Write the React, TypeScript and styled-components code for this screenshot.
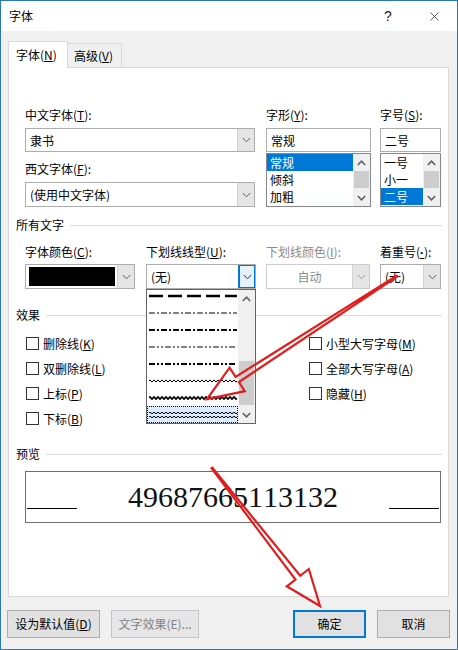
import React from 'react'
import styled, { createGlobalStyle } from 'styled-components'
import { X } from 'lucide-react'

const GlobalStyle = createGlobalStyle`
  html, body { margin: 0; padding: 0; background: #fff; }
  body {
    font-family: "Noto Sans CJK SC", "Noto Sans", sans-serif;
    font-size: 12px;
    color: #000;
    text-autospace: no-autospace;
    text-spacing-trim: space-all;
    font-kerning: none;
  }
  * { box-sizing: border-box; }
  u { text-underline-offset: 1px; }
`

const Window = styled.div`
  position: relative;
  width: 458px;
  height: 650px;
  border: 1px solid #2b79b3;
  background: #f0f0f0;
  display: flex;
  flex-direction: column;
  overflow: hidden;
`

const TitleBar = styled.div`
  height: 30px;
  background: #fff;
  display: flex;
  align-items: center;
  padding-left: 8px;
`

const TitleText = styled.span`
  flex: 1;
  line-height: 16px;
`

const TitleBtn = styled.div`
  width: 46px;
  height: 30px;
  display: flex;
  align-items: center;
  justify-content: center;
  font-size: 14px;
  font-family: "Liberation Sans", sans-serif;
  color: #222;
`

const TabRow = styled.div`
  display: flex;
  align-items: flex-end;
  height: 26px;
  margin: 10px 0 0 7px;
`

const Tab = styled.div<{ $active?: boolean }>`
  height: ${p => (p.$active ? '27px' : '24px')};
  width: ${p => (p.$active ? '60px' : '54px')};
  padding-left: ${p => (p.$active ? '7px' : '6px')};
  display: flex;
  align-items: center;
  background: ${p => (p.$active ? '#fff' : '#f0f0f0')};
  border: 1px solid #d9d9d9;
  border-bottom: none;
  border-left: ${p => (p.$active ? '1px solid #d9d9d9' : 'none')};
  margin-bottom: ${p => (p.$active ? '-1px' : '0')};
  position: relative;
  z-index: ${p => (p.$active ? 1 : 0)};
  line-height: 16px;
`

const Panel = styled.div`
  margin-left: 7px;
  width: 441px;
  height: 530px;
  background: #fff;
  border: 1px solid #d9d9d9;
  padding: 39px 6px 0 7px;
  display: flex;
  flex-direction: column;
`

const Indent = styled.div<{ $pl?: number; $mt?: number }>`
  display: flex;
  padding-left: ${p => p.$pl ?? 9}px;
  margin-top: ${p => p.$mt ?? 0}px;
`

const Field = styled.div<{ $w: number; $ml?: number }>`
  position: relative;
  width: ${p => p.$w}px;
  margin-left: ${p => p.$ml ?? 0}px;
  display: flex;
  flex-direction: column;
`

const Label = styled.div<{ $mt?: number; $mb?: number; $dim?: boolean }>`
  height: 16px;
  line-height: 16px;
  white-space: nowrap;
  margin-top: ${p => p.$mt ?? 0}px;
  margin-bottom: ${p => p.$mb ?? 5}px;
  color: ${p => (p.$dim ? '#8a8a8a' : '#000')};
`

const Key = styled.u<{ $latin?: boolean }>`
  font-family: ${p => (p.$latin ? '"Liberation Sans", sans-serif' : 'inherit')};
  font-weight: ${p => (p.$latin ? 700 : 'inherit')};
`

const ComboBox = styled.div<{ $h?: number; $disabled?: boolean }>`
  height: ${p => p.$h ?? 25}px;
  display: flex;
  background: #fff;
  border: 1px solid ${p => (p.$disabled ? '#cccccc' : '#adadad')};
`

const ComboText = styled.div<{ $center?: boolean; $disabled?: boolean }>`
  flex: 1;
  padding-left: ${p => (p.$center ? 0 : 4)}px;
  display: flex;
  align-items: center;
  justify-content: ${p => (p.$center ? 'center' : 'flex-start')};
  color: ${p => (p.$disabled ? '#8a8a8a' : '#000')};
  white-space: nowrap;
`

const Swatch = styled.div`
  flex: 1;
  margin: 2px 2px 2px 3px;
  background: #000;
`

const DropBtn = styled.div<{ $hot?: boolean }>`
  width: 17px;
  display: flex;
  align-items: center;
  justify-content: center;
  background: ${p => (p.$hot ? '#e5f1fb' : '#e5e5e5')};
  box-shadow: ${p => (p.$hot ? 'inset 0 0 0 1px #0078d7' : 'none')};
  border-left: 1px solid ${p => (p.$hot ? '#0078d7' : '#d2d2d2')};
`

const TextBox = styled.div`
  height: 24px;
  border: 1px solid #adadad;
  display: flex;
  align-items: center;
  padding-left: 4px;
`

const ListBox = styled.div<{ $h: number }>`
  height: ${p => p.$h}px;
  margin-top: 1px;
  border: 1px solid #828790;
  display: flex;
  background: #fff;
`

const ListItems = styled.div`
  flex: 1;
  display: flex;
  flex-direction: column;
  overflow: hidden;
`

const ListItem = styled.div<{ $sel?: boolean; $w?: number }>`
  height: 17px;
  line-height: 17px;
  padding-left: 3px;
  width: ${p => (p.$w ? p.$w + 'px' : 'auto')};
  background: ${p => (p.$sel ? '#0078d7' : 'transparent')};
  color: ${p => (p.$sel ? '#fff' : '#000')};
  white-space: nowrap;
`

const ScrollBar = styled.div`
  width: 17px;
  display: flex;
  flex-direction: column;
  background: #f0f0f0;
`

const ScrollArrow = styled.div`
  height: 17px;
  display: flex;
  align-items: center;
  justify-content: center;
  background: #f0f0f0;
`

const ScrollTrack = styled.div`
  flex: 1;
  display: flex;
  flex-direction: column;
  padding: 0 1px;
`

const Thumb = styled.div<{ $top: number; $h: number }>`
  margin-top: ${p => p.$top}px;
  height: ${p => p.$h}px;
  background: #cdcdcd;
`

const SectionHead = styled.div<{ $mt: number }>`
  display: flex;
  align-items: center;
  gap: 6px;
  height: 16px;
  line-height: 16px;
  margin-top: ${p => p.$mt}px;
  &::after {
    content: '';
    flex: 1;
    height: 1px;
    background: #dcdcdc;
  }
`

const DropList = styled.div`
  position: absolute;
  top: 100%;
  left: 0;
  width: 110px;
  height: 135px;
  background: #fff;
  border: 1px solid #646464;
  display: flex;
  z-index: 5;
`

const PatternItems = styled.div`
  flex: 1;
  overflow: hidden;
  display: flex;
  flex-direction: column;
`

const PatternItem = styled.div<{ $sel?: boolean; $first?: boolean }>`
  height: 17px;
  flex-shrink: 0;
  margin-top: ${p => (p.$first ? '-3px' : '0')};
  padding-left: 2px;
  display: flex;
  align-items: center;
  background: ${p => (p.$sel ? '#dcecfc' : 'transparent')};
  outline: ${p => (p.$sel ? '1px dotted #000' : 'none')};
  outline-offset: -1px;
`

const EffectsWrap = styled.div`
  display: flex;
  padding-left: 10px;
  margin-top: 8px;
`

const EffectCol = styled.div<{ $w?: number }>`
  width: ${p => (p.$w ? p.$w + 'px' : 'auto')};
  display: flex;
  flex-direction: column;
`

const CheckRow = styled.label`
  height: 25px;
  display: flex;
  align-items: center;
  white-space: nowrap;
  line-height: 16px;
`

const Box = styled.span`
  width: 13px;
  height: 13px;
  margin-right: 4px;
  border: 1px solid #333;
  background: #fff;
  flex-shrink: 0;
`

const PreviewBox = styled.div`
  margin: 9px 0 0 9px;
  width: 416px;
  height: 52px;
  border: 1px solid #6e6e6e;
  display: flex;
  align-items: center;
  padding: 0 1px;
`

const PreviewLine = styled.div`
  width: 50px;
  height: 1px;
  background: #000;
  margin-top: 22px;
`

const PreviewText = styled.div`
  flex: 1;
  text-align: center;
  font-family: "Liberation Serif", serif;
  font-size: 30px;
  line-height: 30px;
  color: #111;
`

const ButtonRow = styled.div`
  display: flex;
  margin-top: 13px;
  padding: 0 7px 0 6px;
`

const Button = styled.div<{ $w: number; $ml?: number; $primary?: boolean; $disabled?: boolean }>`
  width: ${p => p.$w}px;
  height: 28px;
  margin-left: ${p => (p.$ml === undefined ? 0 : p.$ml + 'px')};
  display: flex;
  align-items: center;
  justify-content: center;
  background: ${p => (p.$disabled ? '#e6e6e6' : '#e1e1e1')};
  border: ${p => (p.$primary ? '2px solid #0078d7' : p.$disabled ? '1px solid #c4c4c4' : '1px solid #adadad')};
  color: ${p => (p.$disabled ? '#838383' : '#000')};
  line-height: 16px;
`

const Spacer = styled.div`
  flex: 1;
`

const Overlay = styled.svg`
  position: absolute;
  left: -1px;
  top: -1px;
  pointer-events: none;
  z-index: 10;
`

const Chevron = ({ up, color = '#606060', bold }: { up?: boolean; color?: string; bold?: boolean }) => (
  <svg width="9" height="6" viewBox="0 0 9 6">
    <path
      d={up ? 'M0.8 5 L4.5 1.2 L8.2 5' : 'M0.8 1 L4.5 4.8 L8.2 1'}
      fill="none"
      stroke={color}
      strokeWidth={bold ? 1.6 : 1}
    />
  </svg>
)

const wave = (y: number, w: number, a = 1.6) => {
  let d = `M0,${y} q1,-${a} 2,0`
  for (let x = 2; x < w; x += 2) d += ' t2,0'
  return d
}

type Pattern = { dash?: string; width: number; wave?: boolean; double?: boolean }

const patterns: Pattern[] = [
  { dash: '14 5', width: 2.5 },
  { dash: '6 2 2 2', width: 1 },
  { dash: '6 2 2 2', width: 2 },
  { dash: '6 2 2 2 2 2', width: 1 },
  { dash: '6 2 2 2 2 2', width: 2 },
  { wave: true, width: 1 },
  { wave: true, width: 1.8 },
  { wave: true, width: 1, double: true },
]

const LinePattern = ({ p }: { p: Pattern }) => (
  <svg width="88" height="14" viewBox="0 0 88 14">
    {p.wave ? (
      p.double ? (
        <>
          <path d={wave(5, 88)} fill="none" stroke="#000" strokeWidth={p.width} />
          <path d={wave(9, 88)} fill="none" stroke="#000" strokeWidth={p.width} />
        </>
      ) : (
        <path d={wave(7, 88, 2.2)} fill="none" stroke="#000" strokeWidth={p.width} />
      )
    ) : (
      <line x1="0" y1="7" x2="88" y2="7" stroke="#000" strokeWidth={p.width} strokeDasharray={p.dash} />
    )}
  </svg>
)

const arrowPoints = (sx: number, sy: number, tx: number, ty: number, w = 3, h = 14, l = 36) => {
  const dx = tx - sx
  const dy = ty - sy
  const len = Math.hypot(dx, dy)
  const ux = dx / len
  const uy = dy / len
  const nx = -uy
  const ny = ux
  const bx = tx - ux * l
  const by = ty - uy * l
  return [
    [sx + nx * 0.5, sy + ny * 0.5],
    [bx + nx * w, by + ny * w],
    [bx + nx * h, by + ny * h],
    [tx, ty],
    [bx - nx * h, by - ny * h],
    [bx - nx * w, by - ny * w],
    [sx - nx * 0.5, sy - ny * 0.5],
  ]
    .map(pt => pt.map(v => v.toFixed(1)).join(','))
    .join(' ')
}

// label with an underlined access key, e.g. 中文字体(T):
const Acc = ({ text, k, tail = ':' }: { text: string; k: string; tail?: string }) => (
  <span>
    {text + '('}
    <Key $latin={k === '·'}>{k}</Key>
    {')' + tail}
  </span>
)

export default function App() {
  return (
    <>
      <GlobalStyle />
      <Window>
        <TitleBar>
          <TitleText>字体</TitleText>
          <TitleBtn>?</TitleBtn>
          <TitleBtn>
            <X size={15} strokeWidth={1.1} color="#111" />
          </TitleBtn>
        </TitleBar>

        <TabRow>
          <Tab $active>
            <Acc text="字体" k="N" tail="" />
          </Tab>
          <Tab>
            <Acc text="高级" k="V" tail="" />
          </Tab>
        </TabRow>

        <Panel>
          <Indent>
            <Field $w={230}>
              <Label>
                <Acc text="中文字体" k="T" />
              </Label>
              <ComboBox $h={24}>
                <ComboText>隶书</ComboText>
                <DropBtn>
                  <Chevron />
                </DropBtn>
              </ComboBox>
              <Label $mt={9} $mb={5}>
                <Acc text="西文字体" k="F" />
              </Label>
              <ComboBox>
                <ComboText>(使用中文字体)</ComboText>
                <DropBtn>
                  <Chevron />
                </DropBtn>
              </ComboBox>
            </Field>

            <Field $w={105} $ml={11}>
              <Label>
                <Acc text="字形" k="Y" />
              </Label>
              <TextBox>常规</TextBox>
              <ListBox $h={54}>
                <ListItems>
                  <ListItem $sel>常规</ListItem>
                  <ListItem>倾斜</ListItem>
                  <ListItem>加粗</ListItem>
                </ListItems>
                <ScrollBar>
                  <ScrollArrow>
                    <Chevron up bold />
                  </ScrollArrow>
                  <ScrollTrack>
                    <Thumb $top={0} $h={17} />
                  </ScrollTrack>
                  <ScrollArrow>
                    <Chevron bold />
                  </ScrollArrow>
                </ScrollBar>
              </ListBox>
            </Field>

            <Field $w={61} $ml={9}>
              <Label>
                <Acc text="字号" k="S" />
              </Label>
              <TextBox>二号</TextBox>
              <ListBox $h={54}>
                <ListItems>
                  <ListItem>一号</ListItem>
                  <ListItem>小一</ListItem>
                  <ListItem $sel $w={42}>
                    二号
                  </ListItem>
                </ListItems>
                <ScrollBar>
                  <ScrollArrow>
                    <Chevron up bold />
                  </ScrollArrow>
                  <ScrollTrack>
                    <Thumb $top={0} $h={17} />
                  </ScrollTrack>
                  <ScrollArrow>
                    <Chevron bold />
                  </ScrollArrow>
                </ScrollBar>
              </ListBox>
            </Field>
          </Indent>

          <SectionHead $mt={10}>所有文字</SectionHead>

          <Indent $mt={11}>
            <Field $w={110}>
              <Label $mb={4}>
                <Acc text="字体颜色" k="C" />
              </Label>
              <ComboBox>
                <Swatch />
                <DropBtn>
                  <Chevron />
                </DropBtn>
              </ComboBox>
            </Field>

            <Field $w={110} $ml={11}>
              <Label $mb={4}>
                <Acc text="下划线线型" k="U" />
              </Label>
              <ComboBox>
                <ComboText>(无)</ComboText>
                <DropBtn $hot>
                  <Chevron color="#333" />
                </DropBtn>
              </ComboBox>
              <DropList>
                <PatternItems>
                  {patterns.map((p, i) => (
                    <PatternItem key={i} $first={i === 0} $sel={i === patterns.length - 1}>
                      <LinePattern p={p} />
                    </PatternItem>
                  ))}
                </PatternItems>
                <ScrollBar>
                  <ScrollArrow>
                    <Chevron up bold />
                  </ScrollArrow>
                  <ScrollTrack>
                    <Thumb $top={54} $h={44} />
                  </ScrollTrack>
                  <ScrollArrow>
                    <Chevron bold />
                  </ScrollArrow>
                </ScrollBar>
              </DropList>
            </Field>

            <Field $w={104} $ml={10}>
              <Label $mb={4} $dim>
                <Acc text="下划线颜色" k="I" />
              </Label>
              <ComboBox $disabled>
                <ComboText $center $disabled>
                  自动
                </ComboText>
                <DropBtn>
                  <Chevron color="#9a9a9a" />
                </DropBtn>
              </ComboBox>
            </Field>

            <Field $w={61} $ml={10}>
              <Label $mb={4}>
                <Acc text="着重号" k="·" />
              </Label>
              <ComboBox>
                <ComboText>(无)</ComboText>
                <DropBtn>
                  <Chevron />
                </DropBtn>
              </ComboBox>
            </Field>
          </Indent>

          <SectionHead $mt={18}>效果</SectionHead>

          <EffectsWrap>
            <EffectCol $w={283}>
              <CheckRow>
                <Box />
                <Acc text="删除线" k="K" tail="" />
              </CheckRow>
              <CheckRow>
                <Box />
                <Acc text="双删除线" k="L" tail="" />
              </CheckRow>
              <CheckRow>
                <Box />
                <Acc text="上标" k="P" tail="" />
              </CheckRow>
              <CheckRow>
                <Box />
                <Acc text="下标" k="B" tail="" />
              </CheckRow>
            </EffectCol>
            <EffectCol>
              <CheckRow>
                <Box />
                <Acc text="小型大写字母" k="M" tail="" />
              </CheckRow>
              <CheckRow>
                <Box />
                <Acc text="全部大写字母" k="A" tail="" />
              </CheckRow>
              <CheckRow>
                <Box />
                <Acc text="隐藏" k="H" tail="" />
              </CheckRow>
            </EffectCol>
          </EffectsWrap>

          <SectionHead $mt={15}>预览</SectionHead>

          <PreviewBox>
            <PreviewLine />
            <PreviewText>49687665113132</PreviewText>
            <PreviewLine />
          </PreviewBox>
        </Panel>

        <ButtonRow>
          <Button $w={93}>
            <Acc text="设为默认值" k="D" tail="" />
          </Button>
          <Button $w={88} $ml={11} $disabled>
            文字效果(E)...
          </Button>
          <Spacer />
          <Button $w={73} $primary>
            确定
          </Button>
          <Button $w={73} $ml={11}>
            取消
          </Button>
        </ButtonRow>

        <Overlay width="458" height="650" viewBox="0 0 458 650">
          <polygon
            points={arrowPoints(397, 276, 207, 399)}
            fill="none"
            stroke="#e11d1d"
            strokeWidth="2.2"
            strokeLinejoin="miter"
          />
          <polygon
            points={arrowPoints(212, 468, 320, 606)}
            fill="none"
            stroke="#e11d1d"
            strokeWidth="2.2"
            strokeLinejoin="miter"
          />
        </Overlay>
      </Window>
    </>
  )
}
